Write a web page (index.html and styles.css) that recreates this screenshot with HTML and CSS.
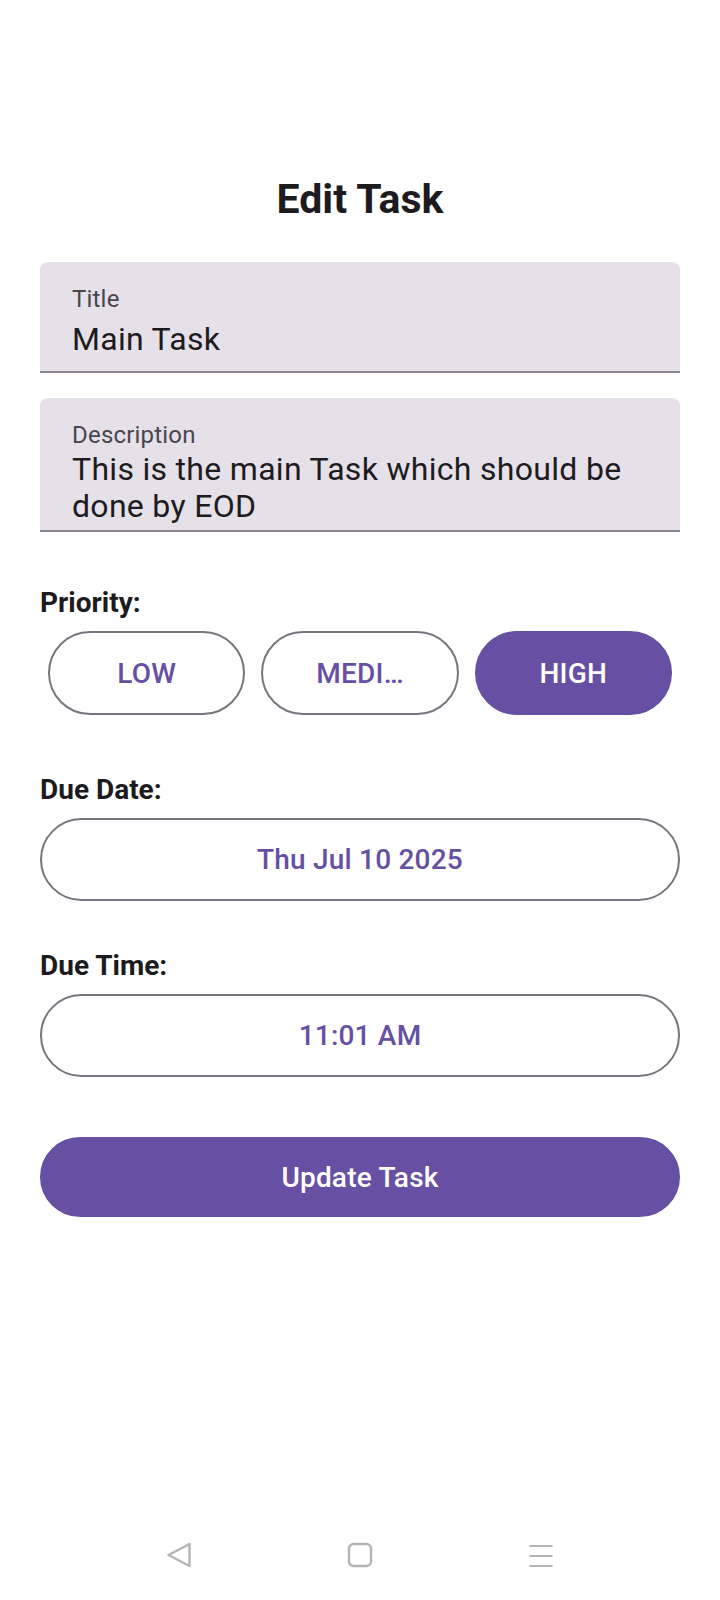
FILE: index.html
```html
<!DOCTYPE html>
<html lang="en">
<head>
<meta charset="utf-8">
<title>Edit Task</title>
<link rel="stylesheet" href="styles.css">
</head>
<body>
<div class="screen">
  <main class="content">
    <h1 class="page-title">Edit Task</h1>

    <div class="field field-title">
      <span class="field-label">Title</span>
      <span class="field-value">Main Task</span>
    </div>

    <div class="field field-desc">
      <span class="field-label">Description</span>
      <span class="field-value field-value-multi">This is the main Task which should be done by EOD</span>
    </div>

    <div class="section section-priority">
      <div class="section-label">Priority:</div>
      <div class="priority-row">
        <button class="pill pill-outline pill-choice"><span class="pill-text">LOW</span></button>
        <button class="pill pill-outline pill-choice" title="MEDIUM"><span class="pill-text">MEDI…</span></button>
        <button class="pill pill-filled pill-choice"><span class="pill-text">HIGH</span></button>
      </div>
    </div>

    <div class="section section-date">
      <div class="section-label">Due Date:</div>
      <button class="pill pill-outline pill-wide"><span class="pill-text">Thu Jul 10 2025</span></button>
    </div>

    <div class="section section-time">
      <div class="section-label">Due Time:</div>
      <button class="pill pill-outline pill-wide"><span class="pill-text">11:01 AM</span></button>
    </div>

    <button class="pill pill-filled pill-wide submit"><span class="pill-text">Update Task</span></button>
  </main>

  <nav class="navbar">
    <svg class="nav-icon" width="26" height="26" viewBox="0 0 26 26" aria-label="Back">
      <path d="M23.5 2 L2.5 13 L23.5 24 Z" fill="none" stroke="#b4b4b4" stroke-width="2.4" stroke-linejoin="round"/>
    </svg>
    <svg class="nav-icon" width="26" height="26" viewBox="0 0 26 26" aria-label="Home">
      <rect x="2" y="2" width="22" height="22" rx="4.5" fill="none" stroke="#b4b4b4" stroke-width="2.4"/>
    </svg>
    <svg class="nav-icon" width="26" height="26" viewBox="0 0 26 26" aria-label="Menu">
      <path d="M1.5 4 H24.5 M1.5 14 H24.5 M1.5 24 H24.5" fill="none" stroke="#b4b4b4" stroke-width="2"/>
    </svg>
  </nav>
</div>
</body>
</html>
```
FILE: styles.css
```css
* {
  box-sizing: border-box;
}

html, body {
  margin: 0;
  padding: 0;
  background: #ffffff;
}

body {
  font-family: Roboto, "Noto Sans", "Liberation Sans", sans-serif;
  color: #1d1b20;
}

.screen {
  width: 720px;
  min-height: 1600px;
  display: flex;
  flex-direction: column;
}

.content {
  display: flex;
  flex-direction: column;
  padding: 175px 40px 0;
}

.page-title {
  margin: 0;
  font-size: 41px;
  line-height: 48px;
  font-weight: 700;
  text-align: center;
  color: #1d1b20;
}

.field {
  display: flex;
  flex-direction: column;
  background: #e6e0e9;
  border-radius: 8px 8px 0 0;
  border-bottom: 2px solid #8a8590;
  padding: 21px 32px 0;
}

.field-title {
  margin-top: 39px;
  padding-bottom: 8px;
}

.field-desc {
  margin-top: 25px;
  padding-bottom: 6px;
}

.field-label {
  font-size: 24px;
  line-height: 32px;
  color: #49454f;
  letter-spacing: 0.2px;
}

.field-value {
  font-size: 32px;
  line-height: 48px;
  color: #1d1b20;
  letter-spacing: 0.3px;
}

.field-value-multi {
  line-height: 36.5px;
}

.section {
  display: flex;
  flex-direction: column;
  gap: 10px;
}

.section-priority {
  margin-top: 53px;
}

.section-date {
  margin-top: 57px;
}

.section-time {
  margin-top: 47px;
}

.section-label {
  font-size: 28px;
  line-height: 36px;
  font-weight: 700;
  color: #1d1b20;
}

.priority-row {
  display: grid;
  grid-template-columns: repeat(3, 1fr);
  column-gap: 16px;
  padding: 0 8px;
}

.pill {
  height: 83px;
  border-radius: 42px;
  display: flex;
  align-items: center;
  justify-content: center;
  padding: 0 24px;
  font-family: Roboto, "Noto Sans", "Liberation Sans", sans-serif;
  font-size: 28px;
  font-weight: 500;
  letter-spacing: 0.2px;
  cursor: pointer;
  min-width: 0;
}

.pill-choice {
  height: 84px;
}

.pill-text {
  white-space: nowrap;
}

.pill-outline {
  background: #ffffff;
  border: 2px solid #79747e;
  color: #6750a4;
}

.pill-filled {
  background: #6750a4;
  border: 2px solid #6750a4;
  color: #ffffff;
}

.pill-wide {
  width: 100%;
}

.submit {
  margin-top: 60px;
  height: 80px;
  border-radius: 40px;
}

.navbar {
  margin-top: auto;
  height: 90px;
  display: flex;
  align-items: center;
  justify-content: center;
  gap: 155px;
}

.nav-icon {
  display: block;
}
```
